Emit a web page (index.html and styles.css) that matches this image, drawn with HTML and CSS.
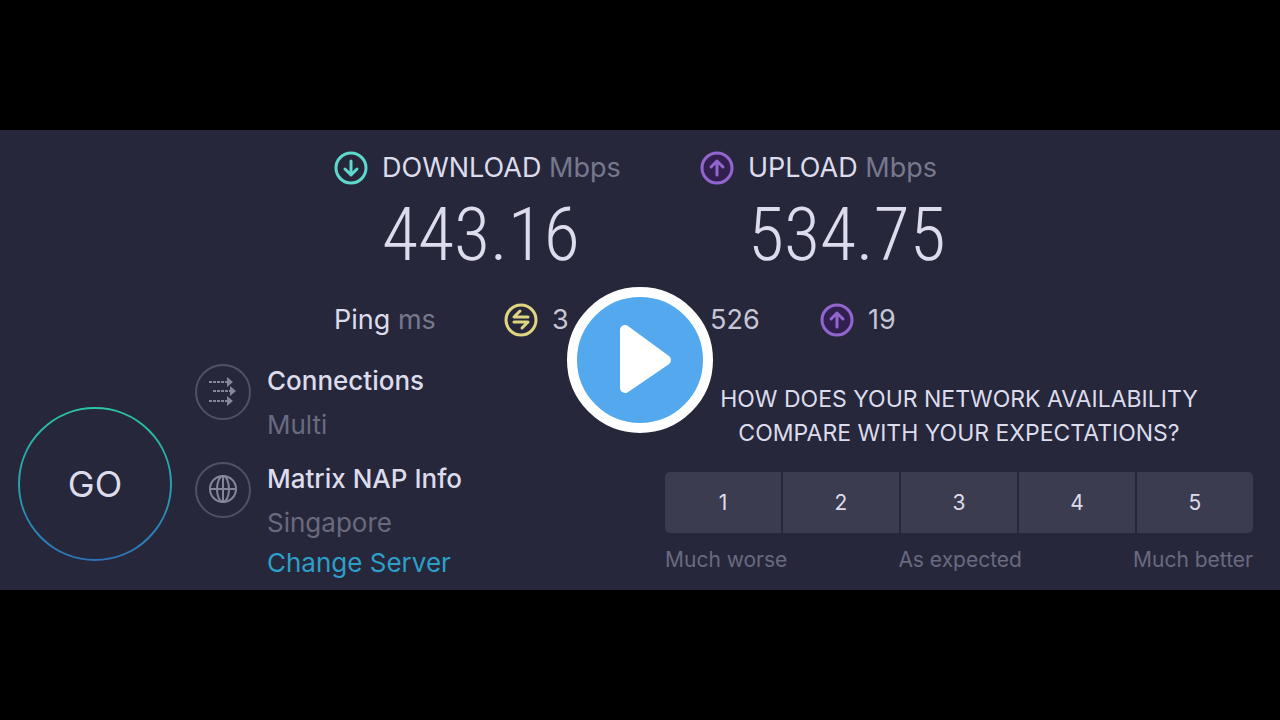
FILE: index.html
```html
<!DOCTYPE html>
<html lang="en">
<head>
    <meta charset="UTF-8">
    <meta name="viewport" content="width=device-width, initial-scale=1.0">
    <title>Speed Test</title>
    <link rel="stylesheet" href="styles.css">
</head>
<body>

    <!-- Shared icons -->
    <svg class="icon-defs" aria-hidden="true">
        <symbol id="icon-arrow" viewBox="0 0 34 34">
            <circle cx="17" cy="17" r="15"/>
            <path d="M17 10v14M11 18l6 6 6-6"/>
        </symbol>
        <symbol id="icon-ping" viewBox="0 0 34 34">
            <circle cx="17" cy="17" r="15"/>
            <path class="thin" d="M16 8l-6 6h14M10 19h14l-6 6"/>
        </symbol>
    </svg>

    <main class="panel">

        <!-- Speed results -->
        <section class="results">
            <div class="result">
                <svg class="icon download"><use href="#icon-arrow"/></svg>
                <h2>DOWNLOAD <span>Mbps</span></h2>
                <p class="speed">443.16</p>
            </div>
            <div class="result">
                <svg class="icon upload"><use href="#icon-arrow"/></svg>
                <h2>UPLOAD <span>Mbps</span></h2>
                <p class="speed">534.75</p>
            </div>
        </section>

        <!-- Ping -->
        <section class="pings">
            <p class="ping-label">Ping <span>ms</span></p>
            <p class="ping"><svg class="icon idle"><use href="#icon-ping"/></svg>3</p>
            <p class="ping"><svg class="icon download"><use href="#icon-arrow"/></svg>526</p>
            <p class="ping"><svg class="icon upload"><use href="#icon-arrow"/></svg>19</p>
        </section>

        <div class="bottom">
            <button class="go-button">
                <svg class="go-ring" viewBox="0 0 156 156" aria-hidden="true">
                    <defs>
                        <linearGradient id="ring" x1="0" y1="0" x2="0" y2="1">
                            <stop offset="0" stop-color="#2bc4a4"/>
                            <stop offset="0.5" stop-color="#299fae"/>
                            <stop offset="1" stop-color="#2d72b8"/>
                        </linearGradient>
                    </defs>
                    <circle cx="78" cy="78" r="76"/>
                </svg>
                GO
            </button>

            <!-- Connection and server -->
            <section class="server">
                <div class="server-row">
                    <svg class="round-icon" viewBox="0 0 56 56">
                        <circle class="outline" cx="28" cy="28" r="27"/>
                        <path class="dashes" d="M14 18h20M18 27h20M14 37h20"/>
                        <path class="heads" d="M32 13l6 5-6 5zM35 22l6 5-6 5zM32 32l6 5-6 5z"/>
                    </svg>
                    <div>
                        <h3>Connections</h3>
                        <p>Multi</p>
                    </div>
                </div>
                <div class="server-row">
                    <svg class="round-icon" viewBox="0 0 56 56">
                        <circle class="outline" cx="28" cy="28" r="27"/>
                        <circle cx="28" cy="27" r="13"/>
                        <ellipse cx="28" cy="27" rx="6" ry="13"/>
                        <path d="M28 14v26M15 27h26"/>
                    </svg>
                    <div>
                        <h3>Matrix NAP Info</h3>
                        <p>Singapore</p>
                        <a href="#">Change Server</a>
                    </div>
                </div>
            </section>

            <!-- Survey -->
            <section class="survey">
                <h4>HOW DOES YOUR NETWORK AVAILABILITY<br>COMPARE WITH YOUR EXPECTATIONS?</h4>
                <div class="scores">
                    <button>1</button>
                    <button>2</button>
                    <button>3</button>
                    <button>4</button>
                    <button>5</button>
                </div>
                <div class="score-labels">
                    <span>Much worse</span>
                    <span>As expected</span>
                    <span>Much better</span>
                </div>
            </section>
        </div>

        <!-- Play button over the panel -->
        <button class="play-button" aria-label="Play">
            <svg viewBox="0 0 148 148">
                <circle cx="74" cy="74" r="68"/>
                <path d="M59 44v58l41-28z"/>
            </svg>
        </button>
    </main>

</body>
</html>
```
FILE: styles.css
```css
/* Base styles */
* {
    box-sizing: border-box;
}

body {
    font-family: Inter, sans-serif;
    margin: 0;
    min-height: 100vh;
    background-color: #000;
    color: #dcdcec;
    display: flex;
    flex-direction: column;
    justify-content: center;
}

h2, h3, h4, p {
    margin: 0;
    font-weight: 400;
}

button {
    font-family: inherit;
    color: inherit;
    border: none;
    padding: 0;
    cursor: pointer;
}

.icon-defs {
    position: absolute;
    width: 0;
    height: 0;
}

.panel {
    position: relative;
    background-color: #26273b;
    padding: 20px 0 14px;
}

/* Round icons */
.icon {
    width: 34px;
    height: 34px;
    fill: none;
    stroke-width: 3;
    stroke-linecap: round;
    stroke-linejoin: round;
}

.download {
    stroke: #61d8ce;
}

.upload {
    stroke: #9366ce;
    fill: #31204f;
    transform: rotate(180deg);
}

.idle {
    stroke: #e0d580;
}

/* Speed results */
.results {
    width: 612px;
    margin: 0 auto;
    display: grid;
    grid-template-columns: 366px auto;
}

.result {
    display: grid;
    grid-template-columns: 34px auto;
    column-gap: 14px;
    align-items: center;
}

.result h2 {
    font-size: 27px;
    line-height: 36px;
}

.result span,
.ping-label span {
    color: #77788e;
}

.speed {
    grid-column: 2;
    font-family: "Roboto Condensed", "Liberation Sans Narrow", Roboto, sans-serif;
    font-size: 74px;
    font-weight: 300;
    line-height: 98px;
}

/* Ping row */
.pings {
    width: 612px;
    margin: 16px auto 0;
    display: grid;
    grid-template-columns: 170px 158px 158px auto;
    align-items: center;
    font-size: 27px;
    line-height: 40px;
}

.ping {
    display: flex;
    align-items: center;
    gap: 14px;
    color: #c6c6d6;
}

/* Bottom section */
.bottom {
    display: flex;
    padding: 24px 27px 0 17px;
}

.go-button {
    position: relative;
    width: 156px;
    height: 156px;
    margin-top: 42px;
    border-radius: 50%;
    background: transparent;
    font-size: 36px;
}

.go-ring {
    position: absolute;
    inset: 0;
    fill: none;
    stroke: url(#ring);
    stroke-width: 2;
}

.server {
    margin-left: 22px;
    display: flex;
    flex-direction: column;
    gap: 10px;
}

.server-row {
    display: flex;
    gap: 16px;
    font-size: 26px;
}

.server-row h3 {
    font-size: 26px;
    font-weight: 500;
    line-height: 34px;
}

.server-row p {
    color: #696a80;
    line-height: 54px;
}

.server-row a {
    display: block;
    color: #2d9fc8;
    line-height: 26px;
    text-decoration: none;
}

.round-icon {
    width: 56px;
    height: 56px;
    fill: none;
    stroke: #85869a;
    stroke-width: 2;
}

.round-icon .outline {
    stroke: #505165;
}

.round-icon .dashes {
    stroke-dasharray: 3 1;
}

.round-icon .heads {
    fill: #85869a;
    stroke: none;
}

/* Survey */
.survey {
    width: 588px;
    margin-left: auto;
    padding-top: 18px;
}

.survey h4 {
    font-size: 23px;
    font-weight: 400;
    line-height: 34px;
    text-align: center;
}

.scores {
    display: grid;
    grid-template-columns: repeat(5, 1fr);
    gap: 2px;
    margin-top: 22px;
    border-radius: 5px;
    overflow: hidden;
}

.scores button {
    height: 61px;
    background-color: #3c3c51;
    font-size: 21px;
}

.score-labels {
    display: flex;
    justify-content: space-between;
    margin-top: 14px;
    color: #696a80;
    font-size: 21px;
    line-height: 26px;
}

/* Play button */
.play-button {
    position: absolute;
    top: 50%;
    left: 50%;
    width: 148px;
    height: 148px;
    transform: translate(-50%, -50%);
    border-radius: 50%;
    background: transparent;
}

.play-button svg {
    display: block;
    fill: #54a9ee;
    stroke: #fff;
    stroke-width: 10;
}

.play-button path {
    fill: #fff;
    stroke-linejoin: round;
}
```
